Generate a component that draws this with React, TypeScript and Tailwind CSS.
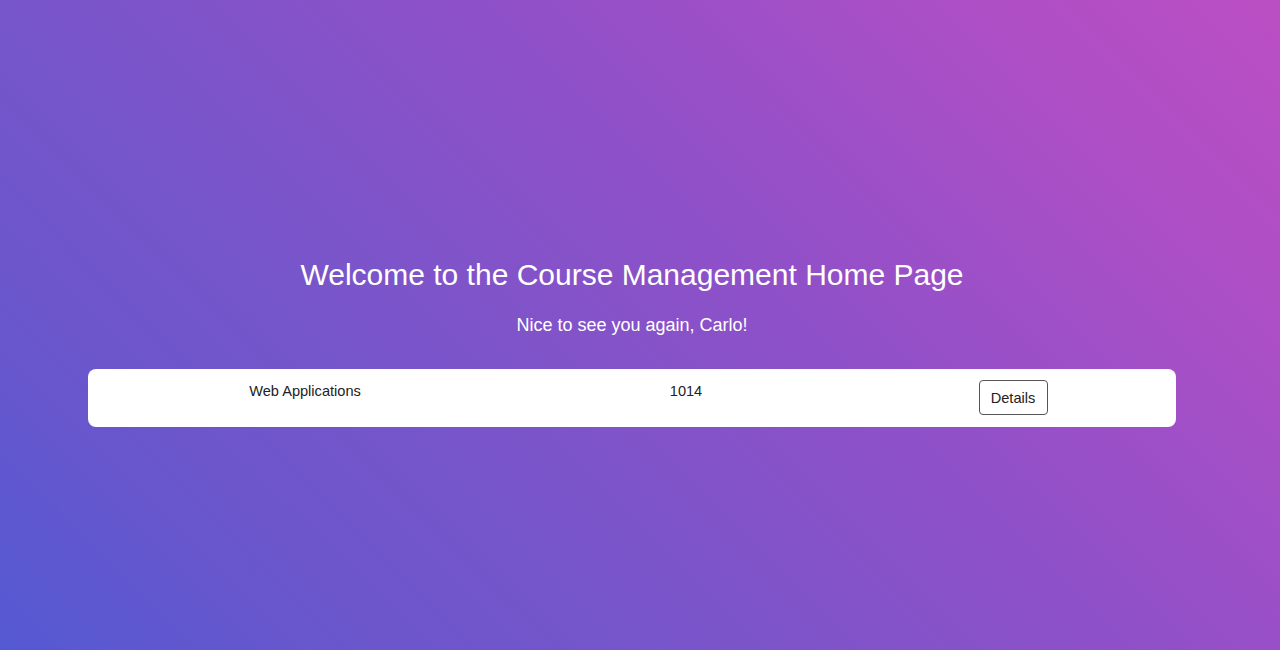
export default function App() {
  return (
    <div
      className="w-full h-[650px] overflow-hidden flex flex-col items-center pr-[16px] bg-[linear-gradient(45deg,#5459d2_0%,#6a56cc_18%,#7855ca_35%,#9050c8_60%,#ac4fc6_82%,#bb4ec3_100%)]"
      style={{ fontFamily: '"Liberation Sans", Arial, sans-serif' }}
    >
      <h1 className="mt-[257px] text-[30px] leading-[36px] text-white font-normal">
        Welcome to the Course Management Home Page
      </h1>
      <p className="mt-[19px] text-[18px] leading-[27px] text-white">
        Nice to see you again, Carlo!
      </p>
      <div className="mt-[30px] w-[1088px] bg-white rounded-[8px] grid grid-cols-[434px_328px_1fr] items-start pt-[11px] pb-[12px] text-[#222] text-[14.6px] leading-[22px]">
        <div className="text-center">Web Applications</div>
        <div className="text-center">1014</div>
        <div className="flex justify-center">
          <button className="h-[35px] w-[69px] border border-[#555] rounded-[4px] text-[14.6px] text-[#222] bg-white">
            Details
          </button>
        </div>
      </div>
    </div>
  );
}
